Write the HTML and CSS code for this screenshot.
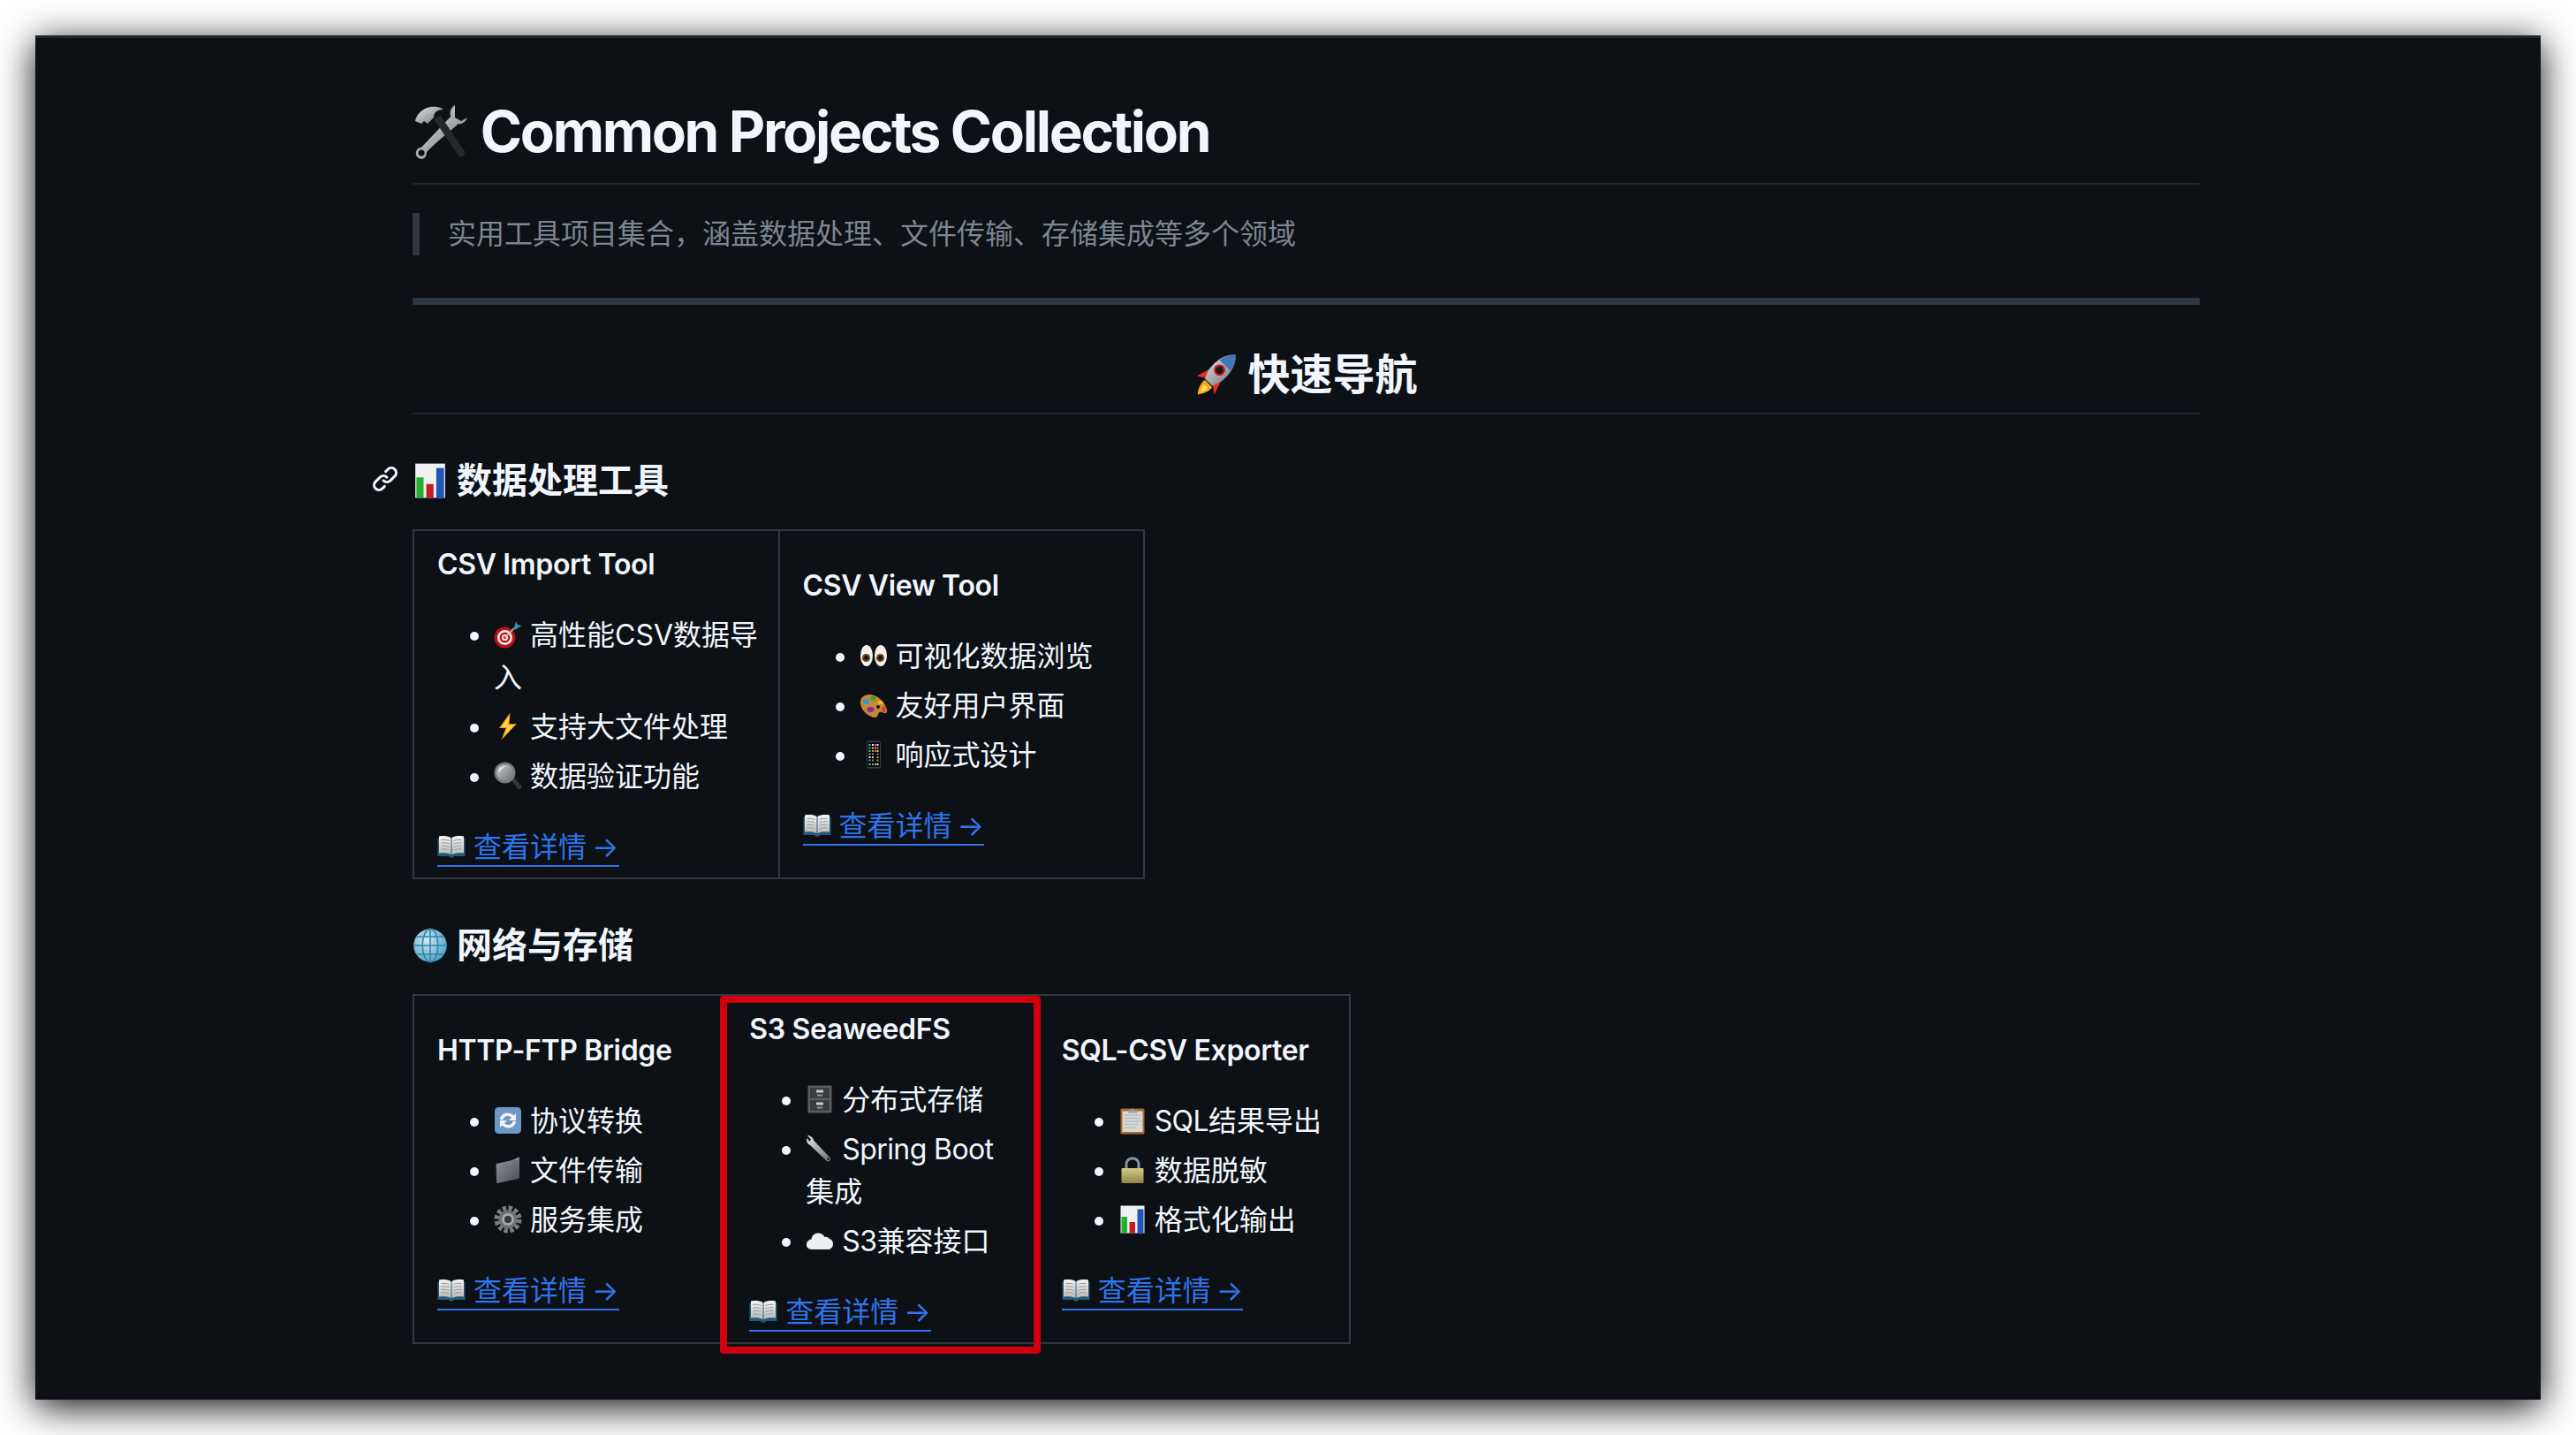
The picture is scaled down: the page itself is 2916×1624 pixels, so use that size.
FILE: index.html
```html
<!DOCTYPE html>
<html lang="zh-CN">
<head>
    <meta charset="UTF-8">
    <title>Common Projects Collection</title>
    <link rel="stylesheet" href="styles.css">
</head>
<body>

<svg class="sprite" xmlns="http://www.w3.org/2000/svg">
    <defs>
        <linearGradient id="g-steel" x1="0" y1="0" x2="1" y2="1"><stop offset="0" stop-color="#e4e6ea"/><stop offset="1" stop-color="#6d6f76"/></linearGradient>
        <linearGradient id="g-paper" x1="0" y1="0" x2="0" y2="1"><stop offset="0" stop-color="#f4f4f4"/><stop offset="1" stop-color="#b9b9b9"/></linearGradient>
        <linearGradient id="g-brass" x1="0" y1="0" x2="0" y2="1"><stop offset="0" stop-color="#d6cb85"/><stop offset="1" stop-color="#8f8547"/></linearGradient>
        <linearGradient id="g-folder" x1="0" y1="0" x2="1" y2="1"><stop offset="0" stop-color="#8d9197"/><stop offset="1" stop-color="#4b4e54"/></linearGradient>
        <linearGradient id="g-lens" x1="0" y1="0" x2="1" y2="1"><stop offset="0" stop-color="#c9cace"/><stop offset="1" stop-color="#6e7075"/></linearGradient>
        <radialGradient id="g-globe" cx=".4" cy=".35" r=".75"><stop offset="0" stop-color="#d7e6ee"/><stop offset="1" stop-color="#3f9cc4"/></radialGradient>
    </defs>
    <symbol id="e-tools" viewBox="0 0 64 64">
        <path d="M50 24 10 58l-4-5 36-38z" fill="url(#g-steel)" transform="translate(1 0)"/>
        <path d="M48 2c-5 3-7 9-4 15L12 50c-5-1-9 3-8 8s8 7 11 2c1-2 1-4 1-5l32-32c6 2 12-1 14-7l-7 4-7-4V9z" fill="url(#g-steel)"/>
        <circle cx="10" cy="56" r="3.5" fill="#0d1117"/>
        <path d="M24 18 31 13 59 54c2 4-4 9-7 5z" fill="#26272b"/>
        <path d="M3 20c1-6 7-14 17-16 7-1 13 1 15 3-8 0-11 4-11 9l-7 7-4-3-3 3z" fill="url(#g-steel)"/>
    </symbol>
    <symbol id="e-rocket" viewBox="0 0 64 64">
        <path d="M22 24 4 34l13 3 8-6z" fill="#e1361f"/>
        <path d="M40 42 30 62l-2-14 6-7z" fill="#e1361f"/>
        <path d="M16 40c-6 3-11 14-11 22 8-1 18-5 22-11z" fill="#f7a81c"/>
        <path d="M15 47c-3 3-5 8-5 11 4-1 8-3 10-6z" fill="#ffe45c"/>
        <path d="M62 2c-14-1-28 6-40 22l-6 14 11 11 14-7C56 30 63 16 62 2z" fill="url(#g-steel)"/>
        <path d="M62 2c-8 0-16 2-24 8l16 16c6-8 9-16 8-24z" fill="#3f78b5"/>
        <circle cx="38" cy="25" r="8.5" fill="#c9151e"/><circle cx="38" cy="25" r="5.5" fill="#14181f"/>
    </symbol>
    <symbol id="e-chart" viewBox="0 0 64 64">
        <rect x="5" y="1" width="54" height="62" fill="#eef0f2"/>
        <rect x="7" y="26" width="13" height="37" fill="#27b02b"/>
        <rect x="25" y="38" width="13" height="25" fill="#c81b1f"/>
        <rect x="43" y="9" width="14" height="54" fill="#1f55b5"/>
    </symbol>
    <symbol id="e-globe" viewBox="0 0 64 64">
        <circle cx="32" cy="32" r="30" fill="url(#g-globe)"/>
        <g fill="none" stroke="#2b86ad" stroke-width="2.5">
            <ellipse cx="32" cy="32" rx="14" ry="30"/><path d="M32 2v60M2 32h60M7 16h50M7 48h50"/>
        </g>
    </symbol>
    <symbol id="e-dart" viewBox="0 0 64 64">
        <circle cx="25" cy="39" r="24" fill="#b5121b"/><circle cx="25" cy="39" r="17" fill="#f3eded"/>
        <circle cx="25" cy="39" r="12" fill="#c8161f"/><circle cx="25" cy="39" r="7" fill="#f3eded"/><circle cx="25" cy="39" r="3.5" fill="#c8161f"/>
        <path d="M25 39 50 14" stroke="#d5cdb2" stroke-width="3"/>
        <path d="M46 18 50 2l4 8 9 2-15 10z" fill="#2a95a8"/>
    </symbol>
    <symbol id="e-bolt" viewBox="0 0 64 64">
        <path d="M37 1 12 36h15L17 63l35-37-17 1z" fill="#f59e16"/>
        <path d="M35 8 17 34h14l-8 20 24-26-16 1z" fill="#ffd84a"/>
    </symbol>
    <symbol id="e-search" viewBox="0 0 64 64">
        <path d="M40 42 46 36 62 54c3 5-4 11-8 7z" fill="#34363b"/>
        <circle cx="25" cy="25" r="24" fill="#77797e"/>
        <circle cx="25" cy="25" r="19" fill="url(#g-lens)"/>
        <path d="M11 20c3-7 9-10 16-10-5 2-11 6-14 14z" fill="#eeeff1"/>
    </symbol>
    <symbol id="e-eyes" viewBox="0 0 64 64">
        <ellipse cx="16" cy="32" rx="14" ry="24" fill="#f4f1ec"/><ellipse cx="48" cy="32" rx="14" ry="24" fill="#f4f1ec"/>
        <circle cx="15" cy="37" r="9" fill="#6b3d16"/><circle cx="47" cy="37" r="9" fill="#6b3d16"/>
        <circle cx="15" cy="37" r="4.5" fill="#120b06"/><circle cx="47" cy="37" r="4.5" fill="#120b06"/>
    </symbol>
    <symbol id="e-palette" viewBox="0 0 64 64">
        <path d="M2 23C4 9 22 4 36 11c12 6 22 17 26 31 2 8-4 10-9 7-6-3-10-2-11 4s-6 9-13 6C14 54 0 39 2 23z" fill="#c8882d"/>
        <ellipse cx="15" cy="24" rx="7" ry="6" fill="#2e9fdd"/><ellipse cx="31" cy="16" rx="6" ry="5" fill="#2aa63a"/>
        <ellipse cx="47" cy="26" rx="6" ry="4" fill="#e9c52b"/><ellipse cx="25" cy="42" rx="8" ry="6" fill="#7a2bb5"/>
        <ellipse cx="55" cy="42" rx="4" ry="7" fill="#d8383a"/><circle cx="42" cy="36" r="4" fill="#0d1117"/>
    </symbol>
    <symbol id="e-phone" viewBox="0 0 64 64">
        <rect x="16" y="1" width="32" height="62" rx="4" fill="#3a3c41"/><rect x="18" y="4" width="28" height="56" fill="#0b0c0f"/>
        <g fill="#58c96b"><rect x="21" y="8" width="4" height="4"/><rect x="21" y="22" width="4" height="4"/><rect x="39" y="36" width="4" height="4"/><rect x="21" y="52" width="4" height="4"/><rect x="28" y="52" width="4" height="4"/><rect x="34" y="52" width="4" height="4"/></g>
        <g fill="#f2c230"><rect x="28" y="15" width="4" height="4"/><rect x="39" y="22" width="4" height="4"/><rect x="28" y="36" width="4" height="4"/></g>
        <g fill="#e9e9e9"><rect x="28" y="8" width="4" height="4"/><rect x="39" y="8" width="4" height="4"/><rect x="21" y="36" width="4" height="4"/><rect x="39" y="52" width="4" height="4"/></g>
        <g fill="#3aa0e8"><rect x="21" y="15" width="4" height="4"/><rect x="39" y="15" width="4" height="4"/><rect x="28" y="29" width="4" height="4"/><rect x="21" y="43" width="4" height="4"/></g>
        <g fill="#e2508c"><rect x="34" y="8" width="4" height="4"/><rect x="34" y="22" width="4" height="4"/><rect x="39" y="29" width="4" height="4"/><rect x="28" y="43" width="4" height="4"/></g>
        <g fill="#f08a2c"><rect x="34" y="15" width="4" height="4"/><rect x="28" y="22" width="4" height="4"/><rect x="21" y="29" width="4" height="4"/><rect x="39" y="43" width="4" height="4"/></g>
    </symbol>
    <symbol id="e-book" viewBox="0 0 64 64">
        <path d="M1 13h62v41H38l-2 3h-8l-2-3H1z" fill="#245b7a"/>
        <path d="M4 9c10-2 20-1 27 3v38c-7-4-17-4-27-3z" fill="url(#g-paper)"/>
        <path d="M60 9c-10-2-20-1-27 3v38c7-4 17-4 27-3z" fill="url(#g-paper)"/>
        <path d="M9 17c7-1 13 0 18 2M9 24c7-1 13 0 18 2M9 31c7-1 13 0 18 2M9 38c7-1 13 0 18 2M55 17c-7-1-13 0-18 2M55 24c-7-1-13 0-18 2M55 31c-7-1-13 0-18 2M55 38c-7-1-13 0-18 2" stroke="#9a9a9a" stroke-width="2" fill="none"/>
    </symbol>
    <symbol id="e-cycle" viewBox="0 0 64 64">
        <rect x="2" y="2" width="60" height="60" rx="9" fill="#6f97c6"/>
        <path d="M14 30c1-9 8-15 17-15 6 0 10 2 14 6l5-5v16H34l6-6c-2-3-5-4-9-4-5 0-9 3-10 8z" fill="#f2f5f8"/>
        <path d="M50 34c-1 9-8 15-17 15-6 0-10-2-14-6l-5 5V32h16l-6 6c2 3 5 4 9 4 5 0 9-3 10-8z" fill="#f2f5f8"/>
    </symbol>
    <symbol id="e-folder" viewBox="0 0 64 64">
        <path d="M8 24 58 3l-1 9-49 20z" fill="#a3a7ad"/>
        <path d="M5 18 52 8c3 0 6 1 6 4v36c0 2-1 3-3 4L9 62c-2 0-3-1-3-3z" fill="url(#g-folder)"/>
    </symbol>
    <symbol id="e-gear" viewBox="0 0 64 64">
        <circle cx="32" cy="32" r="24" fill="none" stroke="#7c7d80" stroke-width="14" stroke-dasharray="8 4.6"/>
        <circle cx="32" cy="32" r="21" fill="#6f7074"/>
        <circle cx="32" cy="32" r="14" fill="#a4a5a8"/><circle cx="32" cy="32" r="8" fill="#35363a"/>
    </symbol>
    <symbol id="e-cabinet" viewBox="0 0 64 64">
        <rect x="5" y="1" width="54" height="62" rx="2" fill="#5a5d62"/>
        <rect x="10" y="6" width="44" height="24" fill="#3a3d42"/><rect x="10" y="34" width="44" height="24" fill="#3a3d42"/>
        <rect x="24" y="11" width="16" height="6" fill="#c9cbce"/><rect x="24" y="39" width="16" height="6" fill="#c9cbce"/>
        <rect x="26" y="21" width="12" height="4" fill="#8d9094"/><rect x="26" y="49" width="12" height="4" fill="#8d9094"/>
    </symbol>
    <symbol id="e-wrench" viewBox="0 0 64 64">
        <path d="M3 8c-2 7 0 13 7 16l38 36c4 4 11-3 7-8L19 14C17 7 11 2 4 2l8 9-3 5z" fill="url(#g-steel)"/>
        <circle cx="51" cy="55" r="2.5" fill="#0d1117"/>
    </symbol>
    <symbol id="e-cloud" viewBox="0 0 64 64">
        <path d="M14 52C5 52 1 46 2 39c1-6 6-10 11-10 1-8 7-14 15-14 7 0 12 3 15 9 3-1 8 0 11 4 5 1 8 6 8 12 0 7-5 12-11 12z" fill="#eceef1"/>
    </symbol>
    <symbol id="e-clipboard" viewBox="0 0 64 64">
        <rect x="5" y="5" width="54" height="58" rx="3" fill="#a56a35"/>
        <rect x="9" y="11" width="46" height="47" fill="#d7d7d5"/>
        <path d="M14 20h36M14 27h36M14 34h36M14 41h30M14 48h24" stroke="#bdbdba" stroke-width="3"/>
        <path d="M22 9h7c0-5 6-5 6 0h7v6H22z" fill="#9ea1a5"/>
    </symbol>
    <symbol id="e-lock" viewBox="0 0 64 64">
        <path d="M15 30V20C15 8 23 3 32 3s17 5 17 17v10h-6V20c0-8-5-11-11-11s-11 3-11 11v10z" fill="#7f93ab"/>
        <rect x="7" y="28" width="50" height="34" rx="2" fill="url(#g-brass)"/>
    </symbol>
    <symbol id="i-link" viewBox="0 0 16 16">
        <path d="m7.775 3.275 1.25-1.25a3.5 3.5 0 1 1 4.95 4.95l-2.5 2.5a3.5 3.5 0 0 1-4.95 0 .751.751 0 0 1 .018-1.042.751.751 0 0 1 1.042-.018 1.998 1.998 0 0 0 2.83 0l2.5-2.5a2.002 2.002 0 0 0-2.83-2.83l-1.25 1.25a.751.751 0 0 1-1.042-.018.751.751 0 0 1-.018-1.042Zm-4.69 9.64a1.998 1.998 0 0 0 2.83 0l1.25-1.25a.751.751 0 0 1 1.042.018.751.751 0 0 1 .018 1.042l-1.25 1.25a3.5 3.5 0 1 1-4.95-4.95l2.5-2.5a3.5 3.5 0 0 1 4.95 0 .751.751 0 0 1-.018 1.042.751.751 0 0 1-1.042.018 1.998 1.998 0 0 0-2.83 0l-2.5 2.5a1.998 1.998 0 0 0 0 2.83Z"/>
    </symbol>
</svg>

<div class="window">
    <div class="markdown">
        <h1><svg class="emoji"><use href="#e-tools"/></svg> Common Projects Collection</h1>
        <blockquote>实用工具项目集合，涵盖数据处理、文件传输、存储集成等多个领域</blockquote>
        <hr>

        <h2><svg class="emoji"><use href="#e-rocket"/></svg> 快速导航</h2>

        <h3>
            <svg class="anchor"><use href="#i-link"/></svg>
            <svg class="emoji"><use href="#e-chart"/></svg> 数据处理工具
        </h3>
        <table class="tools-two">
            <tr>
                <td>
                    <div class="tool-name">CSV Import Tool</div>
                    <ul>
                        <li><svg class="emoji"><use href="#e-dart"/></svg> 高性能CSV数据导入</li>
                        <li><svg class="emoji"><use href="#e-bolt"/></svg> 支持大文件处理</li>
                        <li><svg class="emoji"><use href="#e-search"/></svg> 数据验证功能</li>
                    </ul>
                    <a class="more" href="#"><svg class="emoji"><use href="#e-book"/></svg> 查看详情 →</a>
                </td>
                <td>
                    <div class="tool-name">CSV View Tool</div>
                    <ul>
                        <li><svg class="emoji"><use href="#e-eyes"/></svg> 可视化数据浏览</li>
                        <li><svg class="emoji"><use href="#e-palette"/></svg> 友好用户界面</li>
                        <li><svg class="emoji"><use href="#e-phone"/></svg> 响应式设计</li>
                    </ul>
                    <a class="more" href="#"><svg class="emoji"><use href="#e-book"/></svg> 查看详情 →</a>
                </td>
            </tr>
        </table>

        <h3><svg class="emoji"><use href="#e-globe"/></svg> 网络与存储</h3>
        <div class="table-wrap">
            <table class="tools-three">
                <tr>
                    <td>
                        <div class="tool-name">HTTP-FTP Bridge</div>
                        <ul>
                            <li><svg class="emoji"><use href="#e-cycle"/></svg> 协议转换</li>
                            <li><svg class="emoji"><use href="#e-folder"/></svg> 文件传输</li>
                            <li><svg class="emoji"><use href="#e-gear"/></svg> 服务集成</li>
                        </ul>
                        <a class="more" href="#"><svg class="emoji"><use href="#e-book"/></svg> 查看详情 →</a>
                    </td>
                    <td>
                        <div class="tool-name">S3 SeaweedFS</div>
                        <ul>
                            <li><svg class="emoji"><use href="#e-cabinet"/></svg> 分布式存储</li>
                            <li><svg class="emoji"><use href="#e-wrench"/></svg> <span class="latin">Spring Boot</span>集成</li>
                            <li><svg class="emoji"><use href="#e-cloud"/></svg> <span class="latin">S3</span>兼容接口</li>
                        </ul>
                        <a class="more" href="#"><svg class="emoji"><use href="#e-book"/></svg> 查看详情 →</a>
                    </td>
                    <td>
                        <div class="tool-name">SQL-CSV Exporter</div>
                        <ul>
                            <li><svg class="emoji"><use href="#e-clipboard"/></svg> <span class="latin">SQL</span>结果导出</li>
                            <li><svg class="emoji"><use href="#e-lock"/></svg> 数据脱敏</li>
                            <li><svg class="emoji"><use href="#e-chart"/></svg> 格式化输出</li>
                        </ul>
                        <a class="more" href="#"><svg class="emoji"><use href="#e-book"/></svg> 查看详情 →</a>
                    </td>
                </tr>
            </table>
            <div class="highlight"></div>
        </div>
    </div>
</div>

</body>
</html>
```

FILE: styles.css
```css
* { box-sizing: border-box; }
html, body { margin: 0; }
body { padding: 40px; background: #fff; font-family: Inter, "Noto Sans CJK SC", sans-serif; font-size: 32px; line-height: 48px; color: #f0f6fc; }
.sprite { position: absolute; width: 0; height: 0; }

.window { height: 1544px; background: #0d1015; border-top: 3px solid #21262d; box-shadow: 0 8px 40px rgba(0,0,0,0.95); padding: 65px 0 0 427px; }
.markdown { width: 2023px; }

h1, h2, h3 { margin: 0; font-weight: 600; position: relative; }
h1 { font-size: 64px; font-weight: 700; letter-spacing: -0.037em; line-height: 80px; padding: 1px 0 18px; border-bottom: 2px solid #21262d; margin-bottom: 32px; }
h2 { font-size: 48px; line-height: 60px; padding: 1px 0 13px; border-bottom: 2px solid #21262d; text-align: center; margin-bottom: 48px; }
h3 { font-size: 40px; line-height: 50px; padding-top: 2px; margin-bottom: 30px; }
blockquote { margin: 0; padding: 0 32px; border-left: 8px solid #2f3740; color: #7d8590; height: 48px; }
hr { height: 8px; margin: 48px 0; border: 0; background: #2f3740; }

.emoji { width: 1em; height: 1em; vertical-align: -0.14em; }
.anchor { position: absolute; left: -47px; top: 9px; width: 32px; height: 32px; fill: #f0f6fc; }
.latin { letter-spacing: -0.6px; }

table { border-collapse: collapse; table-layout: fixed; }
td { border: 2px solid #2f3740; padding: 14px 20px 10px 26px; vertical-align: middle; }
.tools-two { width: 829px; margin-bottom: 48px; }
.tools-three { width: 1062px; }
.tool-name { font-weight: 600; letter-spacing: -0.35px; margin-bottom: 32px; }
ul { margin: 0 0 32px; padding-left: 64px; }
li + li { margin-top: 8px; }

.more { color: #2f74ea; text-decoration: none; word-spacing: -3px; border-bottom: 2px solid #2f74ea; padding-bottom: 1px; }
.more .emoji { margin-right: 3px; }

.table-wrap { position: relative; }
.highlight { position: absolute; left: 348px; top: 2px; width: 363px; height: 405px; border: 8px solid #d0000f; border-radius: 4px; }
```
